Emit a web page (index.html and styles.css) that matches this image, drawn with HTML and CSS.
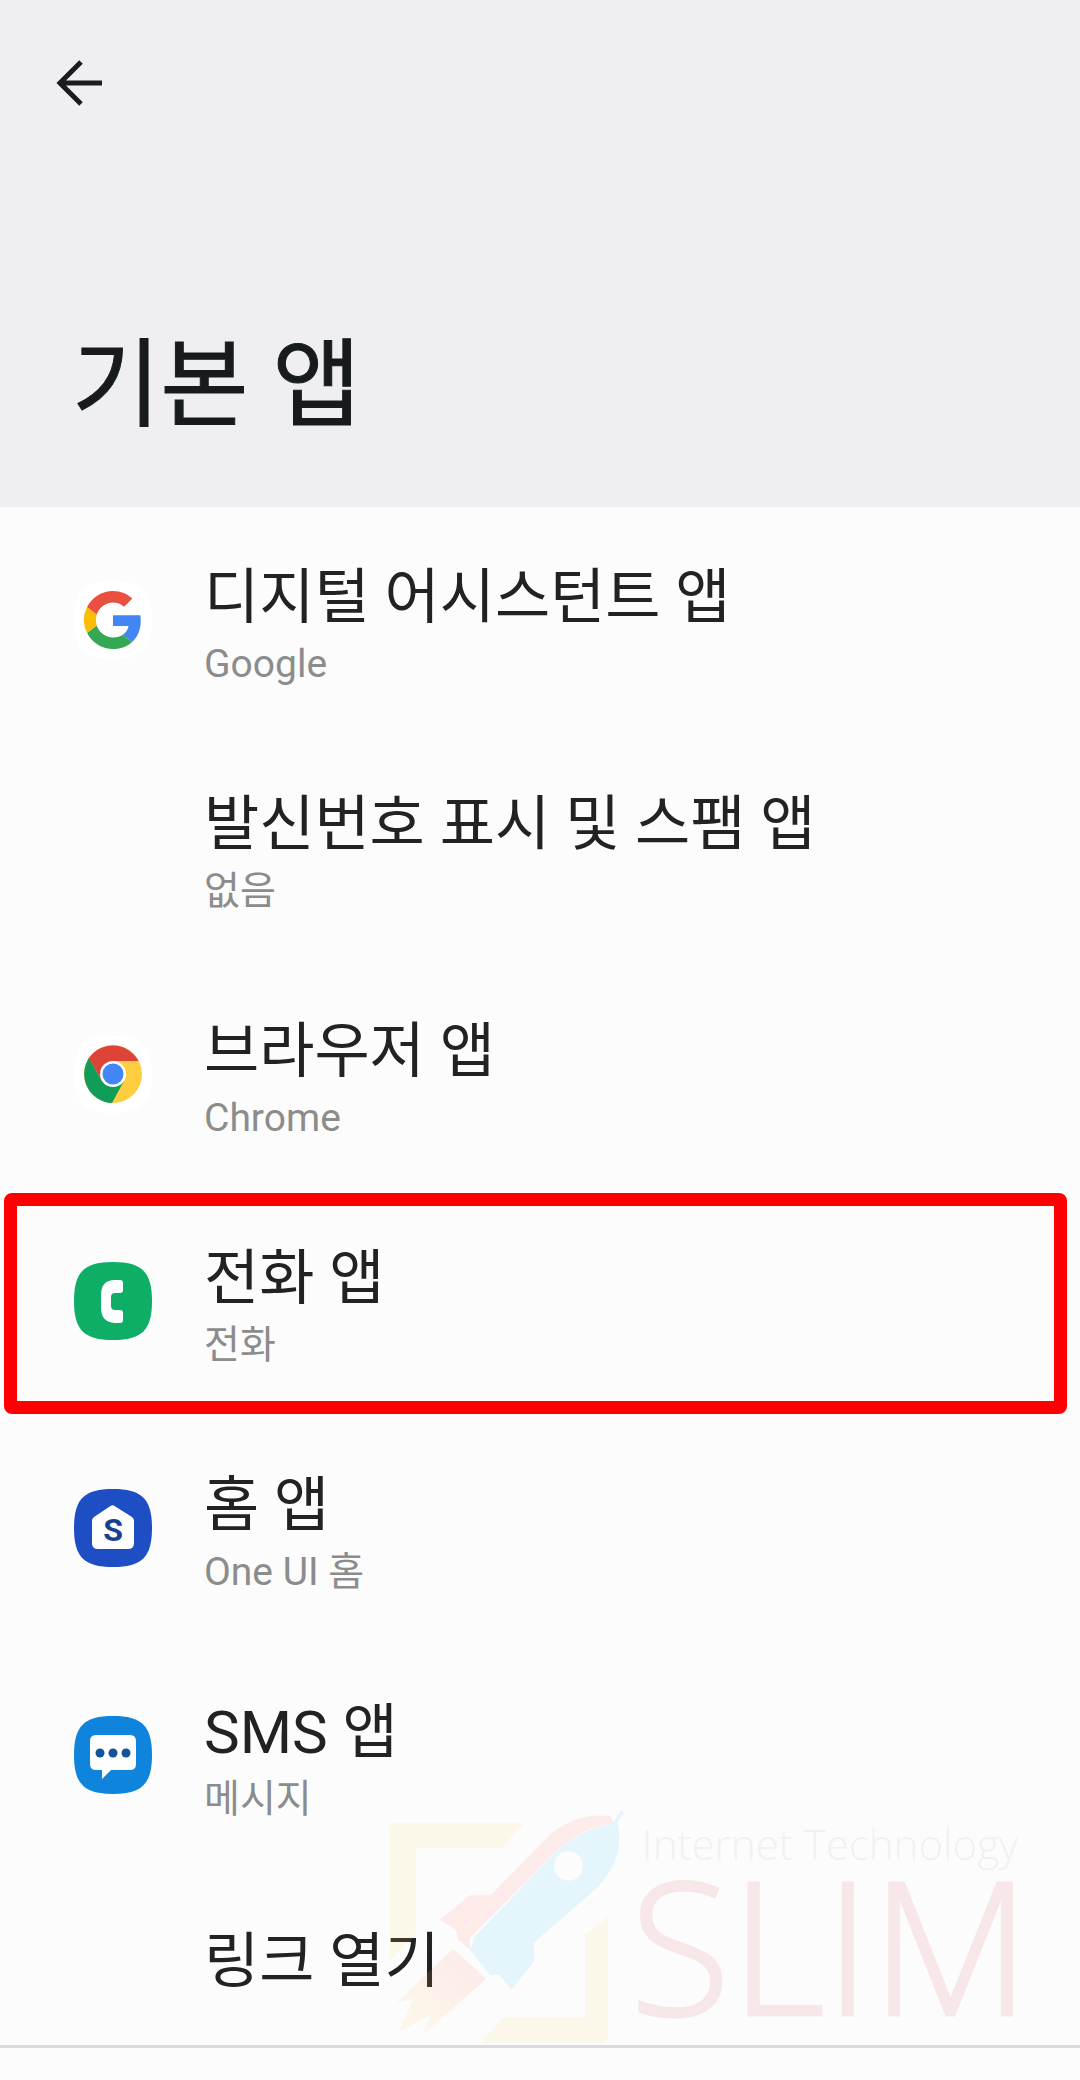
FILE: index.html
```html
<!DOCTYPE html>
<html lang="ko">
<head>
<meta charset="utf-8">
<meta name="viewport" content="width=device-width, initial-scale=1">
<title>기본 앱</title>
<link rel="stylesheet" href="styles.css">
</head>
<body>
<header class="header">
  <button class="back" type="button" aria-label="뒤로">
    <svg viewBox="0 0 48 48" width="48" height="48" fill="none" stroke="#1b1c1e" stroke-width="5"><path d="M46 24H5M25 3L4 24l21 21"/></svg>
  </button>
  <h1 class="page-title">기본 앱</h1>
</header>
<main class="content">
  <ul class="list">
    <li><a class="row" href="#assistant">
      <span class="icon"><svg viewBox="0 0 78 78" width="78" height="78">
        <path fill="#fff" d="M39 0C68 0 78 10 78 39S68 78 39 78 0 68 0 39 10 0 39 0Z"/>
        <g transform="translate(10 10) scale(1.208)">
          <path fill="#4285f4" d="M46.98 24.55c0-1.57-.15-3.09-.38-4.55H24v9.02h12.94c-.58 2.96-2.26 5.48-4.78 7.18l7.73 6c4.51-4.18 7.09-10.36 7.09-17.65z"/>
          <path fill="#34a853" d="M24 48c6.48 0 11.93-2.13 15.89-5.81l-7.73-6c-2.15 1.45-4.92 2.3-8.16 2.3-6.26 0-11.57-4.22-13.47-9.91l-7.98 6.19C6.51 42.62 14.62 48 24 48z"/>
          <path fill="#fbbc05" d="M10.53 28.59A14.5 14.5 0 0 1 10.53 19.41l-7.98-6.19a24 24 0 0 0 0 21.56z"/>
          <path fill="#ea4f40" d="M24 9.5c3.54 0 6.71 1.22 9.21 3.6l6.85-6.85C35.9 2.38 30.47 0 24 0 14.62 0 6.51 5.38 2.56 13.22l7.98 6.19C12.43 13.72 17.74 9.5 24 9.5z"/>
        </g></svg></span>
      <span class="text"><span class="name">디지털 어시스턴트 앱</span><span class="value">Google</span></span>
    </a></li>
    <li><a class="row" href="#caller-id">
      <span class="icon"></span>
      <span class="text"><span class="name">발신번호 표시 및 스팸 앱</span><span class="value">없음</span></span>
    </a></li>
    <li><a class="row" href="#browser">
      <span class="icon"><svg viewBox="0 0 78 78" width="78" height="78">
        <path fill="#fff" d="M39 0C68 0 78 10 78 39S68 78 39 78 0 68 0 39 10 0 39 0Z"/>
        <circle cx="39" cy="39" r="29" fill="#ffcd40"/>
        <path fill="#db4437" d="M39 39 14 24.500A29 29 0 0 1 64.500 26H39z"/>
        <path fill="#0f9d58" d="M15 23A29 29 0 0 0 38 68L50 46 39 52 28 46z"/>
        <path fill="#db4437" d="M15 23 28 46 27 35 39 26z"/>
        <circle cx="39" cy="39" r="13" fill="#fff"/>
        <circle cx="39" cy="39" r="10.500" fill="#4285f4"/></svg></span>
      <span class="text"><span class="name">브라우저 앱</span><span class="value">Chrome</span></span>
    </a></li>
    <li><a class="row row-marked" href="#phone">
      <span class="icon"><svg viewBox="0 0 78 78" width="78" height="78">
        <path fill="#0fae67" d="M39 0C68 0 78 10 78 39S68 78 39 78 0 68 0 39 10 0 39 0Z"/>
        <path fill="#fff" d="M41 18h5q3 0 3 3v7q0 3-3 3h-5q-4 0-4 4v9q0 4 4 4h5q3 0 3 3v7q0 3-3 3h-5Q27 60 27 46V33Q27 18 41 18z"/></svg></span>
      <span class="text"><span class="name">전화 앱</span><span class="value">전화</span></span>
    </a></li>
    <li><a class="row" href="#home">
      <span class="icon"><svg viewBox="0 0 78 78" width="78" height="78">
        <path fill="#1d4ec4" d="M39 0C68 0 78 10 78 39S68 78 39 78 0 68 0 39 10 0 39 0Z"/>
        <path fill="#fff" d="M36.500 17q2-1.500 4 0L58 28q2 1.500 2 4v22q0 6-6 6H24q-6 0-6-6V32q0-2.500 2-4z"/>
        <text class="home-letter" x="39" y="52" text-anchor="middle">S</text></svg></span>
      <span class="text"><span class="name">홈 앱</span><span class="value">One UI 홈</span></span>
    </a></li>
    <li><a class="row" href="#sms">
      <span class="icon"><svg viewBox="0 0 78 78" width="78" height="78">
        <path fill="#0f84dc" d="M39 0C68 0 78 10 78 39S68 78 39 78 0 68 0 39 10 0 39 0Z"/>
        <path fill="#fff" d="M22 19h34q6 0 6 6v23q0 6-6 6H37l-9 9v-9h-6q-6 0-6-6V25q0-6 6-6z"/>
        <g fill="#12549a"><circle cx="26" cy="37" r="4.500"/><circle cx="39" cy="37" r="4.500"/><circle cx="52" cy="37" r="4.500"/></g></svg></span>
      <span class="text"><span class="name">SMS 앱</span><span class="value">메시지</span></span>
    </a></li>
    <li><a class="row row-single" href="#links">
      <span class="icon"></span>
      <span class="text"><span class="name">링크 열기</span></span>
    </a></li>
  </ul>
  <div class="watermark">
    <svg viewBox="0 0 768 780" width="256" height="260">
      <path fill="#ffe066" d="M75 105H465L395 180H137V440L60 520V120q0-15 15-15zM715 385V745q0 20-20 20H330L400 688H645V440z"/>
      <path fill="#ff7766" d="M300 485 265 455 258 425 210 395 300 322H362L540 140Q620 72 722 84L730 105Q630 120 555 195L300 450z"/>
      <path fill="#3ccaff" fill-rule="evenodd" d="M300 485 315 445 555 195Q630 125 728 105L754 66 762 74 742 102Q770 215 670 310L490 465 495 515 425 605 388 560 360 562zM595 190a44 44 0 1 0 1 0z"/>
      <path fill="url(#flame)" d="M250 482 348 572 155 745 185 680 88 730 130 632 78 645z"/>
      <defs><linearGradient id="flame" x1="1" y1="0" x2="0" y2="1"><stop offset=".3" stop-color="#ff8866"/><stop offset=".8" stop-color="#ffd866"/></linearGradient></defs>
    </svg>
    <div class="brand"><span class="brand-tag">Internet Technology</span><span class="brand-name">SLIM</span></div>
  </div>
</main>
</body>
</html>
```
FILE: styles.css
```css
* { box-sizing: border-box; }
body {
  margin: 0;
  min-height: 100vh;
  background: #fcfcfc;
  color: #222;
  font-family: Roboto, "Noto Sans CJK KR", sans-serif;
}
.header {
  display: flex;
  flex-direction: column;
  align-items: flex-start;
  justify-content: space-between;
  min-height: 507px;
  padding: 49px 46px 52px;
  background: #efeff1;
}
.back {
  display: flex;
  align-items: center;
  justify-content: center;
  padding: 10px;
  border: 0;
  background: none;
}
.page-title {
  margin: 0 26px;
  color: #181b1e;
  font-size: 96px;
  line-height: 140px;
  font-weight: 400;
  -webkit-text-stroke: 1px #181b1e;
}
.content { position: relative; }
.list {
  margin: 0;
  padding: 0;
  list-style: none;
  border-bottom: 3px solid #dadada;
}
.row {
  position: relative;
  display: flex;
  align-items: center;
  gap: 52px;
  min-height: 227px;
  padding: 0 74px 2px;
  color: inherit;
  text-decoration: none;
}
.row-single { min-height: 176px; }
.row-marked::after {
  content: "";
  position: absolute;
  inset: 5px 13px 1px 4px;
  border: 13px solid #f00;
  border-radius: 8px;
}
.icon { flex: none; width: 78px; height: 78px; }
.icon svg { display: block; }
.home-letter { font: 700 32px Roboto, sans-serif; fill: #17418f; }
.text { display: flex; flex-direction: column; padding-top: 12px; }
.name { font-size: 60px; line-height: 76px; }
.value { color: #8c8c8c; font-size: 39px; line-height: 56px; }
.watermark {
  position: absolute;
  right: 50px;
  bottom: 0;
  display: flex;
  align-items: flex-start;
  gap: 4px;
  opacity: .12;
  pointer-events: none;
}
.brand {
  display: flex;
  flex-direction: column;
  padding-top: 26px;
  font-family: "Open Sans", sans-serif;
  font-weight: 300;
}
.brand-tag { padding-left: 12px; font-size: 42px; line-height: 60px; color: #aaa; }
.brand-name {
  color: #e35564;
  font-size: 184px;
  line-height: 140px;
  -webkit-text-stroke: 3px #e35564;
}
```
